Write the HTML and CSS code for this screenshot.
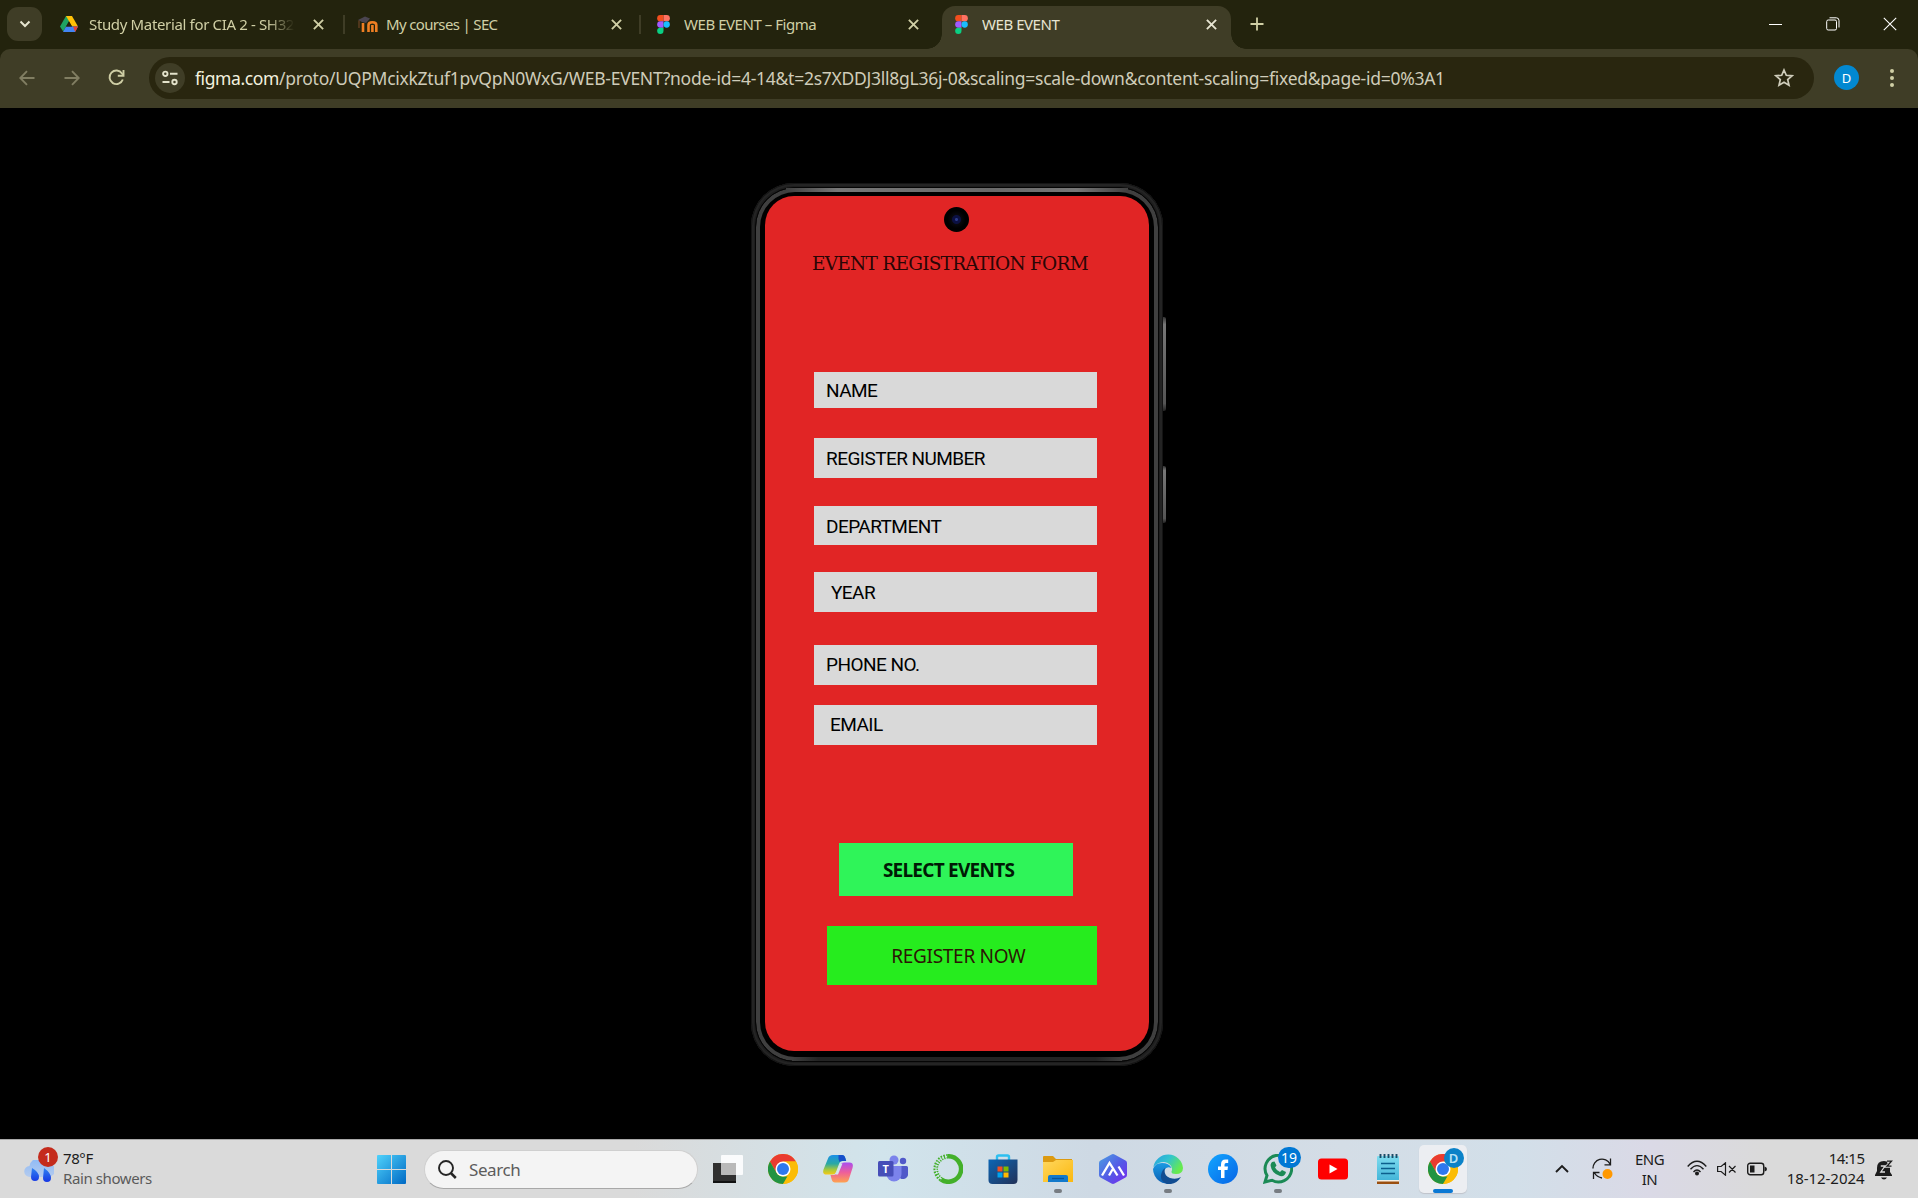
FILE: index.html
```html
<!DOCTYPE html>
<html lang="en">
<head>
<meta charset="utf-8">
<title>WEB EVENT</title>
<link rel="stylesheet" href="styles.css">
</head>
<body>
<svg class="defs" width="0" height="0" aria-hidden="true">
  <defs>
    <linearGradient id="win" x1="0" y1="0" x2="1" y2="1"><stop offset="0" stop-color="#4fd2fb"/><stop offset="1" stop-color="#0069c4"/></linearGradient>
    <linearGradient id="cloud" x1="0" y1="0" x2="0" y2="1"><stop offset="0" stop-color="#8db9f6"/><stop offset="1" stop-color="#b4cbee"/></linearGradient>
    <linearGradient id="drop" x1="0" y1="0" x2="0" y2="1"><stop offset="0" stop-color="#2f83f2"/><stop offset="1" stop-color="#1737e4"/></linearGradient>
    <linearGradient id="copA" x1="0" y1="0" x2="0" y2="1"><stop offset="0" stop-color="#1a8fe8"/><stop offset=".45" stop-color="#2aa9a4"/><stop offset=".75" stop-color="#a6c83c"/><stop offset="1" stop-color="#f6c915"/></linearGradient>
    <linearGradient id="copB" x1="0" y1="0" x2="0" y2="1"><stop offset="0" stop-color="#a94df0"/><stop offset=".5" stop-color="#ee5f9a"/><stop offset="1" stop-color="#ffa24e"/></linearGradient>
    <linearGradient id="store" x1="0" y1="0" x2="1" y2="1"><stop offset="0" stop-color="#0c66b5"/><stop offset="1" stop-color="#223158"/></linearGradient>
    <linearGradient id="folder" x1="0" y1="0" x2="1" y2="1"><stop offset="0" stop-color="#ffd75e"/><stop offset="1" stop-color="#fbb80f"/></linearGradient>
    <linearGradient id="hex" x1="0" y1="0" x2="1" y2="1"><stop offset="0" stop-color="#4ba0e2"/><stop offset=".55" stop-color="#5458e6"/><stop offset="1" stop-color="#7a2af0"/></linearGradient>
    <linearGradient id="edgeTop" x1="0" y1="0" x2="1" y2=".5"><stop offset="0" stop-color="#2a9fe0"/><stop offset=".5" stop-color="#30c4cf"/><stop offset="1" stop-color="#67ea4e"/></linearGradient>
    <linearGradient id="edgeLow" x1="0" y1="0" x2="0" y2="1"><stop offset="0" stop-color="#1b9be3"/><stop offset="1" stop-color="#0b5fb4"/></linearGradient>
    <linearGradient id="fb" x1="0" y1="0" x2="1" y2="1"><stop offset="0" stop-color="#12a6ff"/><stop offset="1" stop-color="#0764e6"/></linearGradient>
    <linearGradient id="note" x1="0" y1="0" x2="0" y2="1"><stop offset="0" stop-color="#7fdcef"/><stop offset="1" stop-color="#41b4d8"/></linearGradient>
    <symbol id="figma" viewBox="0 0 12 18">
      <path fill="#f24e1e" d="M3 0h3v6H3a3 3 0 0 1 0-6z"/><path fill="#ff7262" d="M6 0h3a3 3 0 0 1 0 6H6z"/>
      <path fill="#a259ff" d="M3 6h3v6H3a3 3 0 0 1 0-6z"/><circle fill="#1abcfe" cx="9" cy="9" r="3"/>
      <path fill="#0acf83" d="M3 12h3v3a3 3 0 1 1-3-3z"/>
    </symbol>
    <symbol id="close" viewBox="0 0 10 10"><path d="M.8.8l8.400 8.400M9.200.8L.8 9.200" stroke="currentColor" stroke-width="1.700"/></symbol>
    <symbol id="chrome" viewBox="0 0 30 30">
      <circle cx="15" cy="15" r="15" fill="#fbbc05"/>
      <path fill="#ea3b30" d="M2 7.500A15 15 0 0 1 28 7.500H15L8.500 18.750z"/>
      <path fill="#229342" d="M2 7.500L8.500 18.750A7.500 7.500 0 0 0 15 22.500h6.500L15 30A15 15 0 0 1 2 7.500z"/>
      <path fill="#fbbc05" d="M28 7.500A15 15 0 0 1 15 30l6.500-11.250A7.500 7.500 0 0 0 15 7.500z"/>
      <circle cx="15" cy="15" r="7.500" fill="#fff"/><circle cx="15" cy="15" r="6" fill="#2f78ee"/>
    </symbol>
  </defs>
</svg>

<header class="browser">
  <div class="tabstrip">
    <button class="tab-search" aria-label="Search tabs"><svg width="12" height="8" viewBox="0 0 12 8"><path d="M1.500 1.500L6 6l4.500-4.500" fill="none" stroke="#e6e5cf" stroke-width="2"/></svg></button>
    <div class="tab tab-drive">
      <svg class="favicon drive" width="18" height="17" viewBox="0 0 18 17"><path fill="#1ea362" d="M6 0h6L3.200 15.500 0 10.500z"/><path fill="#ffc107" d="M6 0h6l6 10.500h-6z"/><path fill="#4285f4" d="M6 10.500h12L15 16H3z"/><path fill="#ea4335" d="M13 10.500h5L15.200 16z"/><path fill="#23230d" d="M9 5.500l3 5H6z"/></svg>
      <span class="title fade">Study Material for CIA 2 - SH32</span>
      <svg class="x" width="11" height="11"><use href="#close"/></svg>
    </div>
    <div class="tab tab-moodle">
      <svg class="favicon moodle" width="20" height="17" viewBox="0 0 20 17"><path d="M5 16V7M10.500 16V9q0-2.800 3.900-2.800T18.300 9v7M14.400 16V9" fill="none" stroke="#f07f23" stroke-width="2.600"/><path d="M0 4l7-3.500 5 2-4 4.500-4-1z" fill="#4b4550"/><path d="M1 4.500V12" stroke="#7c4a2a" stroke-width="1"/></svg>
      <span class="title">My courses | SEC</span>
      <svg class="x" width="11" height="11"><use href="#close"/></svg>
    </div>
    <div class="tab tab-figma">
      <svg class="favicon" width="13" height="19"><use href="#figma"/></svg>
      <span class="title">WEB EVENT – Figma</span>
      <svg class="x" width="11" height="11"><use href="#close"/></svg>
    </div>
    <div class="tab tab-active">
      <svg class="favicon" width="13" height="19"><use href="#figma"/></svg>
      <span class="title">WEB EVENT</span>
      <svg class="x" width="11" height="11"><use href="#close"/></svg>
    </div>
    <svg class="new-tab" width="14" height="14" viewBox="0 0 14 14"><path d="M7 .5v13M.5 7h13" stroke="#d0cfa5" stroke-width="1.800"/></svg>
    <div class="window-controls">
      <svg width="14" height="14" viewBox="0 0 14 14"><path d="M0 7.500h13" stroke="#fff"/></svg>
      <svg width="14" height="14" viewBox="0 0 14 14" fill="none" stroke="#fff"><rect x=".7" y="3" width="9.800" height="10" rx="1.500"/><path d="M3.500.8h6.800a2.700 2.700 0 0 1 2.700 2.700v7"/></svg>
      <svg width="14" height="14" viewBox="0 0 14 14"><path d="M.8.8l12.400 12.400M13.200.8L.8 13.200" stroke="#fff" stroke-width="1.100"/></svg>
    </div>
  </div>
  <div class="toolbar">
    <svg class="nav dim" width="16" height="16" viewBox="0 0 16 16"><path d="M15.500 8H1.500M8 1.200L1.300 8 8 14.800" /></svg>
    <svg class="nav dim fwd" width="16" height="16" viewBox="0 0 16 16"><path d="M.5 8h14M8 1.200L14.700 8 8 14.800" /></svg>
    <svg class="nav reload" width="17" height="17" viewBox="0 0 17 17"><path d="M14.800 10.500A6.800 6.800 0 1 1 14 4.500l1.500 2"/><path d="M15.500 1v5.800H9.800"/></svg>
    <div class="omnibox">
      <span class="site-info"><svg width="16" height="16" viewBox="0 0 16 16" fill="none" stroke="#e3e2cb" stroke-width="1.900"><circle cx="3.300" cy="3.800" r="2.200"/><path d="M8 3.800h7.500M.500 12h7"/><circle cx="12.500" cy="12" r="2.200"/></svg></span>
      <span class="url"><b>figma.com</b>/proto/UQPMcixkZtuf1pvQpN0WxG/WEB-EVENT?node-id=4-14&amp;t=2s7XDDJ3ll8gL36j-0&amp;scaling=scale-down&amp;content-scaling=fixed&amp;page-id=0%3A1</span>
      <svg class="star" width="20" height="19" viewBox="0 0 20 19"><path d="M10 2l2.300 5.300 5.700.5-4.300 3.800 1.300 5.600-5-3-5 3 1.300-5.600L2 7.800l5.700-.5z" fill="none" stroke="#cfcdbb" stroke-width="1.700"/></svg>
    </div>
    <span class="avatar">D</span>
    <svg class="menu" width="4" height="18" viewBox="0 0 4 18" fill="#d0cfa5"><circle cx="2" cy="2" r="2"/><circle cx="2" cy="9" r="2"/><circle cx="2" cy="16" r="2"/></svg>
  </div>
</header>

<main class="stage">
  <div class="phone">
    <i class="side volume"></i><i class="side power"></i>
    <div class="rim">
      <form class="screen">
        <i class="camera"></i>
        <h1>EVENT REGISTRATION FORM</h1>
        <div class="field name"><span>NAME</span></div>
        <div class="field register"><span>REGISTER NUMBER</span></div>
        <div class="field department"><span>DEPARTMENT</span></div>
        <div class="field year"><span>YEAR</span></div>
        <div class="field phone-no"><span>PHONE NO.</span></div>
        <div class="field email"><span>EMAIL</span></div>
        <button type="button" class="select"><span>SELECT EVENTS</span></button>
        <button type="button" class="submit"><span>REGISTER NOW</span></button>
      </form>
    </div>
  </div>
</main>

<footer class="taskbar">
  <div class="weather">
    <div class="weather-icon">
      <svg width="30" height="24" viewBox="0 0 30 24"><path fill="url(#cloud)" d="M6 17a5.500 5.500 0 0 1-.5-11A10 10 0 0 1 24 3a7 7 0 0 1 0 14z"/><path fill="url(#drop)" d="M8 8q7 4 7 9a4 4 0 0 1-8 0zM20 8q7 5 7 10a4 4 0 0 1-8 0z"/></svg>
      <span class="badge alert">1</span>
    </div>
    <div class="weather-text"><span>78°F</span><span class="muted">Rain showers</span></div>
  </div>
  <svg class="start" width="29" height="29" viewBox="0 0 29 29"><path fill="url(#win)" d="M1 0h13v14H0V1a1 1 0 0 1 1-1zM15 0h13a1 1 0 0 1 1 1v13H15zM0 15h14v14H1a1 1 0 0 1-1-1zM15 15h14v13a1 1 0 0 1-1 1H15z"/></svg>
  <div class="search"><svg width="19" height="19" viewBox="0 0 19 19" fill="none" stroke="#252525"><circle cx="8" cy="8" r="7" stroke-width="1.900"/><path d="M12.800 13l5 5" stroke-width="2.500"/></svg><span>Search</span></div>
  <div class="apps">
    <span class="app"><svg width="30" height="30" viewBox="0 0 30 30"><path fill="#303030" d="M0 9h23v20H0z"/><path fill="#111" d="M0 27h23v2H0z"/><rect x="8" y="1" width="22" height="20" rx="1" fill="#fff" opacity=".88"/><path fill="#aaa" opacity=".75" d="M8 9h15v12H8z"/></svg></span>
    <span class="app"><svg width="30" height="30"><use href="#chrome"/></svg></span>
    <span class="app"><svg width="30" height="30" viewBox="0 0 30 30"><path fill="url(#copA)" d="M5 4.500Q6 1 10 1h9q2.500 0 3.300 3l.9 3h-3.700q-2.500 0-3.500 3l-3 8q-1 2.500-3.500 2.500H3.500q-4.500 0-3-5z"/><path fill="#174fca" d="M15.500 1H19q2.500 0 3.300 3l.9 3h-3.700q-2 0-3 1-1.500-3-1-7z"/><path fill="url(#copB)" d="M21.500 8.500h5q4.500 0 3 5.500l-3.500 11q-1 3.500-4.500 3.500H12q-2.500 0-3.300-3L7.500 21h3q2.500 0 3.500-3l3-7q1-2.500 4.500-2.500z"/><path fill="#d3e6ee" d="M17 9.500h2.500l-4.500 11h-2.500z"/></svg></span>
    <span class="app"><svg width="30" height="28" viewBox="0 0 30 28"><circle cx="25" cy="6" r="3.200" fill="#5059c9"/><circle cx="16" cy="5" r="4.500" fill="#7b83eb"/><path fill="#5059c9" d="M20 11h8.500q1.500 0 1.500 1.500V18a5 5 0 0 1-10 2z"/><path fill="#7b83eb" d="M10 11h13.500v8a7.500 7.500 0 0 1-15 0z"/><rect y="6" width="15.500" height="15.500" rx="1.500" fill="#464eb8"/><text x="7.700" y="18" text-anchor="middle" font-family="Open Sans" font-size="11" font-weight="700" fill="#fff">T</text></svg></span>
    <span class="app"><svg width="30" height="30" viewBox="0 0 30 30" fill="none" stroke="#43b02a"><path stroke-width="4.600" d="M15 2.300a12.700 12.700 0 1 1-7 23"/><path stroke-width="4.600" stroke-dasharray="1.500 1.200" d="M8 25.300A12.700 12.700 0 0 1 15 2.300"/><path stroke="#d6e7ef" stroke-width="1.100" stroke-dasharray="2 1.500" d="M8.500 25A12.300 12.300 0 0 1 14 2.500"/></svg></span>
    <span class="app"><svg width="30" height="30" viewBox="0 0 30 30"><path d="M9 7V3q0-1.500 1.500-1.500h9Q21 1.500 21 3v4" fill="none" stroke="#2dbff0" stroke-width="2.400"/><path fill="url(#store)" d="M.5 5.500h29V26q0 4-4 4h-21q-4 0-4-4z"/><path fill="#f25022" d="M9.500 12.500h5v5h-5z"/><path fill="#7fba00" d="M15.500 12.500h5v5h-5z"/><path fill="#00a4ef" d="M9.500 18.500h5v5h-5z"/><path fill="#ffb900" d="M15.500 18.500h5v5h-5z"/></svg></span>
    <span class="app running"><svg width="30" height="30" viewBox="0 0 30 30"><path fill="#dc9a10" d="M0 3q0-1 1-1h9l3 3h16v6H0z"/><path fill="url(#folder)" d="M0 8h10l3-2h17v22H0z"/><path fill="#1279cb" d="M5 28v-5q0-2 2-2h16q2 0 2 2v5z"/><path d="M9 24.500h12" stroke="#0a5499" stroke-width="1.300"/></svg></span>
    <span class="app"><svg width="30" height="30" viewBox="0 0 30 30"><path fill="url(#hex)" d="M13.500.5q1.500-.8 3 0l11 6q1.500.8 1.500 2.500v12q0 1.700-1.500 2.500l-11 6q-1.500.8-3 0l-11-6Q1 22.700 1 21V9q0-1.700 1.500-2.500z"/><path d="M4 21.500L11.500 9 19.500 21.500M11 21.500l3.500-6M20.500 12.500L26 21.500" fill="none" stroke="#fff" stroke-width="2.300"/></svg></span>
    <span class="app running"><svg width="30" height="30" viewBox="0 0 30 30"><path fill="url(#edgeTop)" d="M.3 13A15 15 0 0 1 30 14q-.2 6-7 6-5 0-4.500-2.500.8-1.500.5-3Q18 9 11 8 5 8 .3 13z"/><path fill="url(#edgeLow)" d="M0 15q2-6 9-6 7 0 9.500 5-5-2-7 2-1.500 5 2 9 3 3 6 4A15 15 0 0 1 0 15z"/><path fill="#124d92" d="M12 14q-2 7 5 10 6 2 11-1-5 8-14 7-7-3-6-9 1-5 4-7z"/></svg></span>
    <span class="app"><svg width="30" height="30" viewBox="0 0 30 30"><circle cx="15" cy="15" r="15" fill="url(#fb)"/><path fill="#fff" d="M13 24v-8h-3v-3.500h3v-2q0-5 4.500-5h2.700V9H18q-1.500 0-1.500 1.700v1.800H20l-.5 3.500h-3v8z"/></svg></span>
    <span class="app running"><svg width="30" height="30" viewBox="0 0 30 30"><path d="M2 28l2-6.500A13.300 13.300 0 1 1 9 26.300z" fill="none" stroke="#1b8a55" stroke-width="3"/><path fill="#1b8a55" d="M9 8l2.500-.5 2 4-1.500 2q1.500 3 5 4.500l2-2 4 2q-1 5-6 4Q8.500 19.500 7.500 11 8 9 9 8z"/></svg><span class="badge count">19</span></span>
    <span class="app"><svg width="30" height="22" viewBox="0 0 30 22"><rect width="30" height="21" y=".5" rx="3.500" fill="#f00"/><path fill="#fff" d="M11.500 6.500l8 4.500-8 4.500z"/></svg></span>
    <span class="app"><svg width="24" height="30" viewBox="0 0 24 30"><rect x="1" y="2" width="22" height="25" rx="1" fill="url(#note)"/><path fill="#f5efe3" d="M1 26h22v2H1z"/><path fill="#9a4f10" d="M1 27.500h22V30H1z"/><path d="M5 9.500h14M5 14.500h14M5 19.500h14" stroke="#0c5f8d" stroke-width="1.700"/><path d="M4.500 0v4M8.500 0v4M12.500 0v4M16.500 0v4M20.500 0v4" stroke="#1b4b66" stroke-width="1.900"/></svg></span>
    <span class="app active"><svg width="30" height="30"><use href="#chrome"/></svg><span class="badge profile">D</span></span>
  </div>
  <div class="tray">
    <svg class="chevron" width="14" height="9" viewBox="0 0 14 9"><path d="M1 8l6-6 6 6" fill="none" stroke="#1c1c1c" stroke-width="1.900"/></svg>
    <svg class="sync" width="21" height="22" viewBox="0 0 21 22"><path d="M1 10.500A9 9 0 0 1 18 6M18.500.5V6.800h-6M10 20Q5 19 2.500 15M1.500 21v-6.500h6" fill="none" stroke="#1c1c1c" stroke-width="1.300"/><circle cx="15.500" cy="16" r="5" fill="#ff9800"/></svg>
    <div class="lang"><span>ENG</span><span>IN</span></div>
    <svg class="wifi" width="20" height="16" viewBox="0 0 20 16" fill="none" stroke="#1c1c1c" stroke-width="1.400"><path d="M.7 6.500q9.300-10.500 18.600 0M3.500 9.300q6.500-7.300 13 0M6.500 12q3.500-4 7 0"/><circle cx="10" cy="13.500" r="1.300" fill="#1c1c1c"/></svg>
    <svg class="speaker" width="20" height="14" viewBox="0 0 20 14" fill="none" stroke="#1c1c1c" stroke-width="1.200"><path d="M.6 4.500h3.500L8.500.8v12.400L4.100 9.500H.6zM12 4l6.500 6.500M18.500 4L12 10.500"/></svg>
    <svg class="battery" width="20" height="14" viewBox="0 0 20 14"><rect x=".7" y="1.200" width="16" height="11.500" rx="2.500" fill="none" stroke="#1c1c1c" stroke-width="1.400"/><rect x="3" y="3.500" width="4.500" height="7" fill="#1c1c1c"/><path fill="#1c1c1c" d="M17.500 4.500q2.500.5 2.500 2.500t-2.500 2.500z"/></svg>
    <div class="clock"><span>14:15</span><span class="date">18-12-2024</span></div>
    <svg class="bell" width="18" height="20" viewBox="0 0 18 20"><path fill="#1c1c1c" d="M2 11V8Q2 1 9 1q6 0 6 7v4l2 3v1H0v-1zM6 17.500h6q-1 2-3 2t-3-2z"/><path d="M5.800 6H10l-4.200 6H10" fill="none" stroke="#ddd" stroke-width="1.300"/><path d="M12 1.200h4.500l-4.500 5h4.500" fill="none" stroke="#dadada" stroke-width="3"/><path d="M12 1.200h4.500l-4.500 5h4.500" fill="none" stroke="#1c1c1c" stroke-width="1.300"/></svg>
  </div>
</footer>
</body>
</html>
```
FILE: styles.css
```css
* { box-sizing: border-box; }
body {
  margin: 0;
  width: 1918px;
  height: 1198px;
  overflow: hidden;
  display: flex;
  flex-direction: column;
  background: #000;
  font-family: "Noto Sans", "Open Sans", sans-serif;
}
svg { display: block; flex: none; }
button { border: 0; padding: 0; }
.defs { position: absolute; }

/* Browser chrome */
.browser { flex: none; height: 108px; background: #23230d; }
.tabstrip { height: 49px; display: flex; align-items: center; padding-left: 7px; }
.tab-search {
  width: 35px; height: 34px; margin-bottom: 1px; border-radius: 11px; background: #3f3d26;
  display: flex; align-items: center; justify-content: center; flex: none;
}
.tab {
  position: relative; flex: none; height: 43px; margin-top: 6px; padding: 0 14px 7px 17px;
  display: flex; align-items: center; color: #d0cfa5; font-size: 15px; white-space: nowrap;
}
.tab .title { margin: -1px 0 0 14px; flex: 1; overflow: hidden; letter-spacing: -.45px; }
.tab .x { margin-left: 18px; }
.tab-drive { width: 300px; padding-left: 18px; padding-right: 18px; }
.tab-drive .title { margin-left: 11px; margin-right: -6px; letter-spacing: -.35px; }
.fade { -webkit-mask-image: linear-gradient(90deg, #000 84%, transparent 97%); mask-image: linear-gradient(90deg, #000 84%, transparent 97%); }
.tab-moodle { width: 298px; padding-left: 16px; padding-right: 18px; }
.tab-moodle .title { margin-left: 8px; letter-spacing: -.65px; }
.tab-figma { width: 302px; padding-right: 23px; }
.tab-moodle::before, .tab-figma::before {
  content: ""; position: absolute; left: 1px; top: 9px; width: 2px; height: 19px; background: #3f3d26;
}
.tab-figma::before { left: -1px; }
.tab-active {
  width: 289px; padding-left: 13px; background: #3f3d26; border-radius: 13px 13px 0 0; color: #e7e5d2;
}
.tab-active::before, .tab-active::after {
  content: ""; position: absolute; bottom: 0; width: 15px; height: 15px;
}
.tab-active::before { left: -15px; background: radial-gradient(circle at 0 0, transparent 14.5px, #3f3d26 15px); }
.tab-active::after { right: -15px; background: radial-gradient(circle at 100% 0, transparent 14.5px, #3f3d26 15px); }
.new-tab { margin: 0 0 1px 19px; }
.window-controls { display: flex; gap: 43px; margin: 0 0 2px auto; padding-right: 21px; }

.toolbar {
  height: 59px; padding: 0 24px 2px 19px; display: flex; align-items: center;
  background: #3f3d26; border-radius: 10px 10px 0 0;
}
.nav { fill: none; stroke: #cfcea5; stroke-width: 1.9; }
.nav.dim { stroke: #817e62; }
.fwd { margin-left: 29px; }
.reload { margin-left: 28px; }
.omnibox {
  margin-left: 24px; width: 1665px; height: 42px; border-radius: 21px; padding: 0 20px 0 6px;
  background: #29260f; display: flex; align-items: center;
}
.site-info {
  width: 30px; height: 30px; border-radius: 50%; background: #3f3d26;
  display: flex; align-items: center; justify-content: center;
}
.url { margin-left: 10px; flex: 1; white-space: nowrap; font-size: 17.5px; letter-spacing: -.26px; color: #cfccb9; }
.url b { font-weight: 400; color: #f3f1df; letter-spacing: -.4px; }
.avatar {
  margin-left: 20px; width: 25px; height: 25px; border-radius: 50%; background: #0288d1; color: #fff;
  font-size: 13px; display: flex; align-items: center; justify-content: center;
}
.menu { margin-left: auto; }

/* Prototype device */
.stage { height: 1031px; flex: none; padding: 75px 0 0 751px; }
.phone {
  position: relative; width: 412px; height: 883px; padding: 4px; border-radius: 43px;
  background: #1d1d1d; box-shadow: inset 0 0 0 1px #141414, inset 0 0 0 3px #242424;
}
.rim {
  height: 100%; padding: 9px 10px 11px; border-radius: 40px;
  background: #000;
  border: 1px solid #050505;
  box-shadow: inset 0 0 0 4px #3f3f3f;
  position: relative;
}
.rim::before {
  content: ""; position: absolute; left: 30px; right: 30px; top: 0; height: 4px;
  background: linear-gradient(90deg, #3f3f3f, #777 15%, #696969 60%, #777 85%, #3f3f3f);
}
.rim::after {
  content: ""; position: absolute; left: 36px; right: 36px; bottom: 0; height: 4px;
  background: linear-gradient(90deg, #3f3f3f, #232323 8%, #232323 92%, #3f3f3f);
}
.side { position: absolute; left: 412px; width: 3px; border-radius: 0 2px 2px 0; background: linear-gradient(#333, #777 8%, #555 92%, #222); }
.volume { top: 134px; height: 94px; }
.power { top: 283px; height: 57px; }
.screen {
  position: relative; z-index: 1; width: 384px; height: 855px; border-radius: 29px; background: #e12525;
  padding-left: 49px; margin: -1px 0 0 -1px; display: flex; flex-direction: column; align-items: flex-start;
}
.camera {
  width: 25px; height: 25px; margin: 11px 0 0 130px; flex: none; border-radius: 50%;
  background: radial-gradient(circle, #2a3a8a 0 1px, #0b1042 2px 4px, #08080c 5px, #000 9px);
}
.screen h1 {
  margin: 18px 0 0 -2px; height: 28px; white-space: nowrap;
  font: 400 18.500px/28px "DejaVu Serif", serif; letter-spacing: -.76px; color: #2a0505;
}
.field {
  width: 282.700px; flex: none; background: #d9d9d9; padding-left: 12px; display: flex; align-items: center;
  font-family: Roboto, sans-serif; font-size: 19px; font-weight: 400; color: #000;
}
.field span { letter-spacing: -.55px; }
.name { height: 35.500px; margin-top: 94px; padding-top: 2px; }
.register { height: 40px; margin-top: 30.500px; }
.department { height: 38.500px; margin-top: 28px; padding-top: 2px; }
.year { height: 40px; margin-top: 27.800px; padding-left: 17px; }
.phone-no { height: 40px; margin-top: 32.700px; padding-bottom: 1px; }
.email { height: 40px; margin-top: 20.500px; padding-left: 16px; padding-bottom: 1px; }
.select {
  width: 234px; height: 53px; margin: 97.300px 0 0 25px; flex: none; background: #2ff459;
  font: 700 19px/1 "Noto Sans", sans-serif; color: #001a05; padding: 2px 15px 0 0;
}
.submit {
  width: 269.700px; height: 59px; margin: 30.500px 0 0 13px; flex: none; background: #26ec1e;
  font: 400 19px/1 "Noto Sans", sans-serif; color: #2c1505; padding: 1px 7px 0 0;
}
.select span { letter-spacing: -.75px; }
.submit span { letter-spacing: -.3px; }

/* Windows taskbar */
.taskbar {
  position: relative; height: 59px; flex: none; display: flex; border-top: 1px solid #a9a9a9;
  background: linear-gradient(90deg, #dadada 0, #dadada 33%, #d1e4ec 46%, #ced9e4 57%, #d4dde6 70%, #d2dfe9 79%, #dad9e6 86%, #dadada 92%);
  color: #1c1c1c; font-size: 15px;
}
.weather { width: 377px; padding: 0 0 0 24px; display: flex; }
.weather-icon { position: relative; width: 30px; padding-top: 20px; }
.badge {
  position: absolute; display: flex; align-items: center; justify-content: center; border-radius: 50%;
  color: #fff; font-size: 13px; line-height: 1;
}
.alert { left: 14px; top: 7px; width: 20px; height: 20px; background: #c42b1c; }
.weather-text, .lang, .clock { display: flex; flex-direction: column; line-height: 20px; padding-top: 8px; white-space: nowrap; }
.weather-text { margin-left: 9px; letter-spacing: -.4px; }
.muted { color: #5a5a5a; }
.start { margin-top: 15px; }
.search {
  margin: 10px 0 0 18px; width: 273.500px; height: 39px; border: 1px solid #cfcfcf; border-bottom-color: #a8a8a8; border-radius: 20px;
  background: #f4f4f4; display: flex; align-items: center; padding-left: 13px; font-size: 17px; color: #5c5c5c;
}
.search span { margin-left: 12px; letter-spacing: -.4px; }
.apps { margin-left: 3px; display: flex; }
.app { position: relative; width: 55px; height: 58px; display: flex; align-items: center; justify-content: center; }
.app svg { position: relative; }
.running::after, .active::after {
  content: ""; position: absolute; left: 23.500px; top: 49px; width: 8px; height: 4px; border-radius: 2px; background: #777c82;
}
.active::after { left: 17.500px; width: 20px; background: #0a78d4; }
.active::before {
  content: ""; position: absolute; left: 3.500px; top: 5px; width: 48px; height: 48px; border-radius: 5px;
  background: #eceef2; box-shadow: 0 1px 1px #bfc3ca;
}
.count { left: 27px; top: 7px; width: 23px; height: 21px; background: #0078d4; font-size: 14px; border-radius: 11px; }
.profile { left: 28px; top: 8px; width: 20px; height: 20px; background: #0b82c8; font-weight: 600; color: #b8e2f6; }
.tray { display: flex; margin-left: 84px; align-items: flex-start; }
.chevron { margin-top: 24px; }
.sync { margin: 18px 0 0 23px; }
.lang { margin-left: 22px; width: 30px; align-items: center; letter-spacing: -.5px; padding-top: 9px; }
.wifi { margin: 20px 0 0 22px; }
.speaker { margin: 22px 0 0 10px; }
.battery { margin: 22px 0 0 10px; }
.clock { width: 98px; align-items: flex-end; letter-spacing: -.5px; }
.date { letter-spacing: -.05px; }
.bell { margin: 20px 0 0 10px; }
```
